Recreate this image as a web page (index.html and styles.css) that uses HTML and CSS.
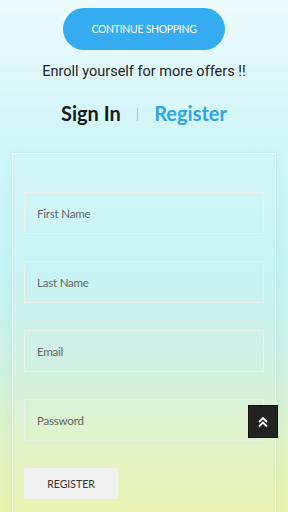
FILE: index.html
```html
<!DOCTYPE html>
<html lang="en">
<head>
    <meta charset="UTF-8">
    <meta name="viewport" content="width=device-width, initial-scale=1.0">
    <title>Register</title>
    <link rel="stylesheet" href="styles.css">
</head>
<body>
    <div class="page">
        <div class="top">
            <a href="#" class="btn-shop">CONTINUE SHOPPING</a>
            <p class="enroll">Enroll yourself for more offers !!</p>
            <div class="tabs">
                <span class="tab">Sign In</span>
                <span class="sep">|</span>
                <span class="tab active">Register</span>
            </div>
        </div>

        <form class="card">
            <input type="text" class="field" placeholder="First Name">
            <input type="text" class="field" placeholder="Last Name">
            <input type="email" class="field" placeholder="Email">
            <input type="password" class="field" placeholder="Password">
            <button type="button" class="btn-register">REGISTER</button>
        </form>
    </div>

    <a href="#" class="to-top">
        <svg width="12" height="12" viewBox="0 0 12 12" fill="none" stroke="#fff" stroke-width="1.8">
            <path d="M2 6 L6 2 L10 6"/>
            <path d="M2 10.5 L6 6.5 L10 10.5"/>
        </svg>
    </a>
</body>
</html>
```

FILE: styles.css
```css
* {
    margin: 0;
    padding: 0;
    box-sizing: border-box;
}

body {
    font-family: Lato, sans-serif;
    min-height: 100vh;
    background: linear-gradient(180deg, #eefbfc 0%, #d4f6f9 22%, #c4f3f4 50%, #cdf0e2 68%, #e4f2bb 88%, #ecf2a8 100%);
    overflow: hidden;
}

.page {
    padding: 8px 12px 0;
}

.top {
    display: flex;
    flex-direction: column;
    align-items: center;
}

.btn-shop {
    display: flex;
    align-items: center;
    justify-content: center;
    width: 162px;
    height: 42px;
    border-radius: 21px;
    background: #35acf1;
    color: #fff;
    text-decoration: none;
    font-size: 10.5px;
    letter-spacing: -0.3px;
    font-family: Lato, sans-serif;
}

.enroll {
    margin-top: 12px;
    font-family: Roboto, sans-serif;
    font-size: 14.5px;
    color: #222;
    line-height: 20px;
}

.tabs {
    margin-top: 18px;
    display: flex;
    align-items: center;
    gap: 15px;
    height: 26px;
}

.tab {
    font-family: Lato, sans-serif;
    font-weight: 700;
    font-size: 20px;
    color: #1a1a1a;
}

.tab.active {
    color: #2ea5ea;
}

.sep {
    color: #999;
    font-size: 14px;
    font-weight: 300;
}

.card {
    margin-top: 27px;
    border: 1px solid rgba(255, 255, 255, 0.5);
    background: rgba(255, 255, 255, 0.08);
    box-shadow: 0 0 6px rgba(150, 200, 200, 0.25);
    padding: 38px 11px 20px;
    display: flex;
    flex-direction: column;
    gap: 27px;
    height: 380px;
}

.field {
    width: 100%;
    height: 42px;
    border: 1px solid rgba(235, 240, 235, 0.9);
    background: transparent;
    padding: 0 12px;
    font-family: Lato, sans-serif;
    font-size: 11.5px;
    letter-spacing: -0.2px;
    color: #555;
    outline: none;
}

.field::placeholder {
    color: #5f6666;
}

.btn-register {
    width: 94px;
    height: 31px;
    border: none;
    border-radius: 2px;
    background: #f1f1f1;
    color: #333;
    font-family: Lato, sans-serif;
    font-size: 10.5px;
}

.to-top {
    position: fixed;
    left: 248px;
    top: 405px;
    width: 30px;
    height: 33px;
    background: #222;
    border: 1px solid #111;
    display: flex;
    align-items: center;
    justify-content: center;
}
```
